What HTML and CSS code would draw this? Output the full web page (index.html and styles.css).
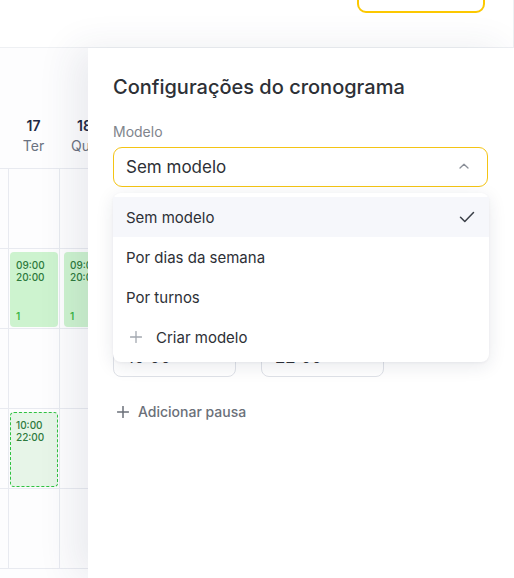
FILE: index.html
```html
<!DOCTYPE html>
<html lang="pt">
<head>
<meta charset="utf-8">
<link rel="stylesheet" href="styles.css">
</head>
<body>
<div class="header">
  <div class="top-btn"></div>
</div>
<div class="main">
  <div class="calendar">
    <div class="days">
      <div class="gutter"></div>
      <div class="day"><span class="num">17</span><span class="dname">Ter</span></div>
      <div class="day"><span class="num">18</span><span class="dname">Qua</span></div>
    </div>
    <div class="grid">
      <div class="row">
        <div class="gutter"></div><div class="cell"></div><div class="cell"></div>
      </div>
      <div class="row">
        <div class="gutter"></div>
        <div class="cell"><div class="shift"><span>09:00</span><span>20:00</span><span class="count">1</span></div></div>
        <div class="cell"><div class="shift second"><span>09:00</span><span>20:00</span><span class="count">1</span></div></div>
      </div>
      <div class="row">
        <div class="gutter"></div><div class="cell"></div><div class="cell"></div>
      </div>
      <div class="row">
        <div class="gutter"></div>
        <div class="cell"><div class="shift draft"><span>10:00</span><span>22:00</span></div></div>
        <div class="cell"></div>
      </div>
      <div class="row">
        <div class="gutter"></div><div class="cell"></div><div class="cell"></div>
      </div>
    </div>
  </div>
  <div class="panel">
    <h2 class="title">Configurações do cronograma</h2>
    <div class="label">Modelo</div>
    <div class="field">
      <div class="select">
        <span>Sem modelo</span>
        <svg class="chev" width="10" height="6" viewBox="0 0 10 6"><path d="M1 5 L5 1.2 L9 5" fill="none" stroke="#8a8f98" stroke-width="1.3" stroke-linecap="round" stroke-linejoin="round"/></svg>
      </div>
      <div class="menu">
        <div class="opt active"><span>Sem modelo</span>
          <svg width="16" height="12" viewBox="0 0 16 12"><path d="M1.5 6.2 L5.8 10.5 L14.5 1.5" fill="none" stroke="#3a3f47" stroke-width="1.5" stroke-linecap="round" stroke-linejoin="round"/></svg>
        </div>
        <div class="opt"><span>Por dias da semana</span></div>
        <div class="opt"><span>Por turnos</span></div>
        <div class="opt create">
          <svg width="12" height="12" viewBox="0 0 12 12"><path d="M6 0.5 V11.5 M0.5 6 H11.5" stroke="#a3a8b0" stroke-width="1.3" stroke-linecap="round"/></svg>
          <span>Criar modelo</span>
        </div>
      </div>
    </div>
    <div class="times">
      <div class="time">10:00</div>
      <div class="time">22:00</div>
    </div>
    <div class="add-pause">
      <svg width="12" height="12" viewBox="0 0 12 12"><path d="M6 0.5 V11.5 M0.5 6 H11.5" stroke="#6b7079" stroke-width="1.5" stroke-linecap="round"/></svg>
      <span>Adicionar pausa</span>
    </div>
  </div>
</div>
</body>
</html>
```
FILE: styles.css
```css
* { box-sizing: border-box; }
html, body { margin: 0; padding: 0; overflow: hidden; }
body {
  width: 514px;
  height: 578px;
  font-family: Inter, "Liberation Sans", sans-serif;
  background: #ffffff;
  color: #2d3036;
}
.header {
  height: 48px;
  border-bottom: 1px solid #eef0f3;
  border-right: 1px solid #eef0f3;
  display: flex;
  justify-content: flex-end;
  padding-right: 28px;
}
.top-btn {
  width: 128px;
  height: 40px;
  margin-top: -27px;
  border: 2px solid #fcc800;
  border-radius: 9px;
}
.main {
  display: flex;
  height: 530px;
}
.calendar {
  width: 88px;
  flex: none;
  overflow: hidden;
  background: #fdfdfe;
}
.days {
  display: flex;
  height: 121px;
  width: 200px;
  border-bottom: 1px solid #e8eaf0;
}
.gutter { width: 8px; flex: none; }
.day {
  width: 51px;
  flex: none;
  display: flex;
  flex-direction: column;
  align-items: center;
  padding-top: 68px;
  font-size: 14px;
  line-height: 20px;
}
.num { color: #1f2a44; font-weight: 600; font-size: 14px; }
.dname { color: #6b7280; font-size: 14px; }
.grid { width: 200px; }
.row {
  display: flex;
  height: 80px;
  border-bottom: 1px solid #e8eaf0;
}
.row:first-child { height: 80px; }
.cell {
  width: 51px;
  flex: none;
  border-left: 1px solid #e8eaf0;
  padding: 3px 0 0 1px;
}
.shift {
  width: 48px;
  height: 75px;
  border-radius: 4px;
  background: #cdf3cf;
  display: flex;
  flex-direction: column;
  padding: 7px 0 0 6px;
  font-size: 10px;
  line-height: 12px;
  font-weight: 500;
  color: #2e7a3d;
}
.shift.second { margin-left: 3px; }
.shift .count {
  margin-top: auto;
  margin-bottom: 5px;
  color: #3cb646;
  font-weight: 600;
}
.shift.draft {
  background: #e7f5e8;
  border: 1px dashed #2fc241;
  padding: 6px 0 0 5px;
  height: 75px;
}
.panel {
  flex: 1;
  position: relative;
  z-index: 1;
  background: #ffffff;
  box-shadow: -14px 0 36px rgba(40, 50, 90, 0.09);
  padding: 25px 26px 0 25px;
}
.title {
  margin: 0;
  font-size: 20px;
  line-height: 28px;
  font-weight: 500;
  color: #2d3036;
}
.label {
  margin-top: 22px;
  font-size: 14px;
  line-height: 18px;
  color: #80848c;
}
.field {
  position: relative;
  margin-top: 6px;
}
.select {
  height: 40px;
  border: 1px solid #f4c414;
  border-radius: 9px;
  display: flex;
  align-items: center;
  justify-content: space-between;
  padding: 0 18px 0 12px;
  font-size: 17px;
  color: #2d3036;
}
.chev { margin-top: -2px; }
.menu {
  position: absolute;
  left: 0;
  right: -1px;
  top: 46px;
  background: #ffffff;
  border-radius: 8px;
  box-shadow: 0 4px 18px rgba(30, 40, 70, 0.10), 0 1px 3px rgba(30, 40, 70, 0.05);
  padding: 4px 0 5px;
  z-index: 2;
}
.opt {
  height: 40px;
  display: flex;
  align-items: center;
  justify-content: space-between;
  padding: 0 14px 0 13px;
  font-size: 15px;
  color: #2d3036;
}
.opt.active { background: #f6f7fb; }
.opt.create {
  justify-content: flex-start;
  gap: 14px;
  padding-left: 17px;
}
.times {
  display: flex;
  gap: 25px;
  margin-top: 150px;
}
.time {
  width: 123px;
  height: 40px;
  border: 1px solid #dfe2e8;
  border-radius: 8px;
  display: flex;
  align-items: center;
  padding-left: 13px;
  font-size: 17px;
  color: #2d3036;
}
.add-pause {
  margin-top: 26px;
  display: flex;
  align-items: center;
  gap: 9px;
  padding-left: 4px;
  font-size: 14px;
  font-weight: 500;
  color: #6b7079;
}
```
